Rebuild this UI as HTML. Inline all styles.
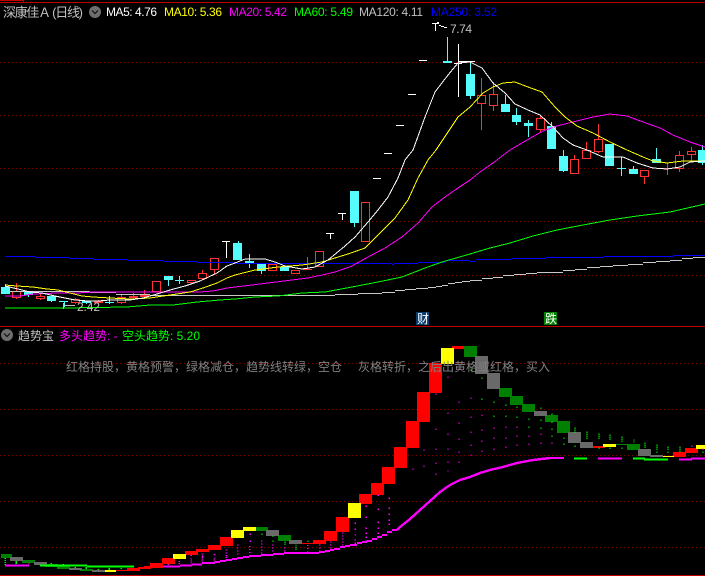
<!DOCTYPE html>
<html><head><meta charset="utf-8"><style>
html,body{margin:0;padding:0;background:#000;width:705px;height:576px;overflow:hidden}
svg{display:block}
text{font-family:"WenQuanYi Zen Hei","Liberation Sans","Noto Sans CJK SC",sans-serif;font-size:12px}
.l{font-family:"Liberation Sans",sans-serif;font-size:12px}
.g path{fill:none;stroke:#7a0000;stroke-width:1;stroke-dasharray:1 3}
.m{fill:none;stroke-width:1;stroke-linejoin:miter}
.r path{fill:none;stroke:#ff3232}
.r rect{fill:#000;stroke:#ff3232}
.c path{fill:none;stroke:#54fcfc}
.c rect{fill:#54fcfc}
.w path{fill:none;stroke:#fff}
</style></head><body>
<svg width="705" height="576" viewBox="0 0 705 576" shape-rendering="crispEdges">
<rect width="705" height="576" fill="#000"/>
<!-- borders -->
<path d="M0 2.5H705M0 .5H23M23.5 0V2M0 326.5H705M0 575.5H705" stroke="#c00000" fill="none"/>
<!-- grid -->
<g class="g">
<path d="M0 62.5H705M0 115.5H705M0 168.5H705M0 221.5H705M0 275.5H705M0 363.5H705M0 409.5H705M0 455.5H705M0 501.5H705M0 547.5H705"/>
</g>
<!-- cyan candles -->
<g class="c">
<path d="M5.5 284V294M28.5 291V297M51.5 296V302M64.5 301V307M86.5 301V304M109.5 296V304M168.5 280V286M179.5 276V284M238.5 241V243M249.5 254V268M261.5 271V274M354.5 223V227M447.5 37V62M470.5 61V99M505.5 95V104M516.5 108V125M528.5 120V137M551.5 122V126M563.5 150V172M621.5 157V176M633.5 166V169M656.5 148V163M702.5 145V165"/>
<rect x="1" y="287" width="9" height="7"/><rect x="24" y="291" width="9" height="4"/><rect x="47" y="296" width="9" height="5"/>
<rect x="59" y="301" width="9" height="1"/><rect x="82" y="301" width="9" height="2"/><rect x="105" y="302" width="9" height="1"/>
<rect x="164" y="276" width="9" height="4"/><rect x="175" y="280" width="9" height="1"/><rect x="233" y="243" width="9" height="17"/>
<rect x="245" y="261" width="9" height="2"/><rect x="257" y="264" width="9" height="7"/><rect x="280" y="267" width="9" height="4"/>
<rect x="350" y="191" width="9" height="32"/><rect x="443" y="61" width="9" height="2"/><rect x="466" y="74" width="9" height="22"/>
<rect x="501" y="104" width="9" height="8"/><rect x="512" y="115" width="9" height="7"/><rect x="524" y="123" width="9" height="3"/>
<rect x="547" y="126" width="9" height="23"/><rect x="559" y="156" width="9" height="15"/><rect x="605" y="144" width="9" height="22"/>
<rect x="617" y="168" width="9" height="1"/><rect x="629" y="169" width="9" height="5"/><rect x="652" y="159" width="9" height="4"/>
<rect x="698" y="150" width="7" height="13"/>
</g>
<!-- red candles -->
<g class="r">
<path d="M16.5 283V299M40.5 294V300M75.5 298V304M98.5 300V304M121.5 295V304M133.5 293V300M144.5 290V297M202.5 270V280M214.5 258V274M307.5 257V270M481.5 78V130M493.5 82V111M540.5 115V132M574.5 155V174M586.5 142V158M598.5 124V153M644.5 170V184M667.5 163V175M679.5 151V172M691.5 147V161"/>
<rect x="12.5" y="291.5" width="8" height="6"/><rect x="36.5" y="296.5" width="8" height="2"/><rect x="71.5" y="299.5" width="8" height="3"/>
<rect x="94.5" y="301.5" width="8" height="1"/><rect x="117.5" y="297.5" width="8" height="5"/><rect x="129.5" y="296.5" width="8" height="1" style="fill:#ff3232"/>
<rect x="140.5" y="295.5" width="8" height="1" style="fill:#ff3232"/><rect x="152.5" y="281.5" width="8" height="10"/>
<rect x="187.5" y="280.5" width="8" height="2"/><rect x="198.5" y="273.5" width="8" height="5"/><rect x="210.5" y="258.5" width="8" height="11"/>
<rect x="268.5" y="264.5" width="8" height="6"/><rect x="291.5" y="270.5" width="8" height="3"/><path d="M303 269.5H312"/>
<rect x="315.5" y="251.5" width="8" height="15"/><rect x="361.5" y="202.5" width="8" height="39"/>
<rect x="477.5" y="95.5" width="8" height="8"/><rect x="489.5" y="94.5" width="8" height="11"/><rect x="536.5" y="118.5" width="8" height="11"/>
<rect x="570.5" y="159.5" width="8" height="14"/><rect x="582.5" y="150.5" width="8" height="8"/><rect x="594.5" y="139.5" width="8" height="12"/>
<rect x="640.5" y="170.5" width="8" height="6"/><path d="M663 168.5H672"/><rect x="675.5" y="155.5" width="8" height="13"/><rect x="687.5" y="151.5" width="8" height="3"/>
</g>
<!-- white doji / dashes -->
<g class="w">
<path d="M222 241.5H230M226.5 241V258M326 233.5H334M330.5 233V239M338 213.5H346M342.5 213V220M373 178.5H381M384 153.5H392M396 125.5H404M408 94.5H416M419 60.5H427M454 63.5H462M458.5 44V97M458 61.5H475"/>
</g>
<!-- MAs -->
<path class="m" stroke="#0000ff" d="M5 256.5H35M35 257.5H70M70 258.5H93M93 259.5H128M128 260.5H163M163 261.5H197M197 262.5H235M235 263.5H392M392 264.5H394M394 263.5H418M418 262.5H445M445 260.5H470M470 261.5H476M476 259.5H511M511 258.5H546M546 257.5H604M604 256.5H673M673 255.5H705" stroke-width="1.4"/>
<path class="m" stroke="#c8c8c8" d="M10 291.5H90M90 292.5H116M116 294.5H150M150 295.5H335M335 294.5H358M358 293.5H382M382 292.5H395M395 290.5H405M405 289.5H416M416 288.5H428M428 287.5H436M436 286.5H442M442 285.5H448M448 283.5H455M455 282.5H462M462 281.5H470M470 280.5H482M482 278.5H493M493 277.5H503M503 275.5H514M514 274.5H526M526 273.5H537M537 272.5H563M563 270.5H575M575 269.5H587M587 267.5H600M600 266.5H613M613 265.5H628M628 264.5H643M643 262.5H656M656 261.5H670M670 260.5H682M682 258.5H693M693 257.5H705"/>
<polyline class="m" stroke="#00ff00" points="5,308 63,308 127,307 150,305 173,305 197,302 220,300 235,299 255,297 278,296 302,293 325,292 352,287 378,282 402,277 425,268 442,262 470,254 490,248 510,243 533,236 557,230 583,225 610,220 637,216 670,212 705,204"/>
<polyline class="m" stroke="#ff00ff" points="5,296 20,296 33,294 57,293 77,293 93,292 200,292 213,291 227,288 235,287 252,285 268,283 292,280 308,278 322,275 335,272 352,266 368,257 385,248 402,237 418,223 432,207 445,197 458,188 470,180 480,172 493,163 510,150 527,140 543,131 557,126 573,122 593,117 610,114 627,116 643,122 660,128 673,135 690,142 705,147"/>
<polyline class="m" stroke="#ffff00" points="5,285 17,286 33,287 47,289 58,290 70,293 82,296 93,297 110,298 130,299 150,298 163,296 177,294 190,292 203,288 217,283 227,278 235,275 255,270 278,267 302,265 322,262 348,254 365,248 378,235 395,218 408,200 418,178 428,160 436,150 448,132 458,117 470,107 483,93 493,87 503,83 515,82 528,87 542,92 555,107 565,117 577,126 593,133 610,142 627,150 643,157 653,161 667,163 683,161 705,161"/>
<polyline class="m" stroke="#ffffff" points="5,286 18,289 30,292 42,293 55,296 65,298 75,300 88,301 98,301 110,300 130,300 143,298 157,294 170,290 185,286 200,281 217,273 227,266 235,263 245,259 265,259 275,262 285,266 302,269 315,267 328,260 345,246 355,237 368,222 378,210 388,197 398,178 405,160 413,150 425,117 435,92 448,75 458,63 470,62 482,68 493,83 505,93 515,104 528,110 540,115 553,127 563,138 573,145 587,150 603,157 623,157 637,163 653,168 667,169 680,167 690,162 705,161"/>
<!-- price labels -->
<path d="M432 23.5H439M435.5 23V31M437 22.5H439M439 25.5H441M441 26.5H444M444 27.5H447" stroke="#fff" fill="none"/>
<text class="l" x="450" y="33" fill="#c0c0c0" textLength="22">7.74</text>
<path d="M63.5 303V309M65 305.5H75" stroke="#c0c0c0" fill="none"/>
<text class="l" x="77" y="311" fill="#c0c0c0" textLength="23">2.42</text>
<!-- header upper -->
<text x="3" y="17" fill="#c0c0c0" style="font-size:13px" textLength="80">深康佳Ａ (日线)</text>
<circle cx="95" cy="12" r="6" fill="#6e6e6e" shape-rendering="auto"/>
<path d="M92 10.5L95 13.5L98 10.5" stroke="#111" fill="none" stroke-width="1.2" shape-rendering="auto"/>
<text class="l" x="106" y="16" fill="#ffffff" textLength="51">MA5: 4.76</text>
<text class="l" x="164" y="16" fill="#ffff00" textLength="58">MA10: 5.36</text>
<text class="l" x="229" y="16" fill="#ff00ff" textLength="58">MA20: 5.42</text>
<text class="l" x="294" y="16" fill="#00ff00" textLength="59">MA60: 5.49</text>
<text class="l" x="359" y="16" fill="#c0c0c0" textLength="64">MA120: 4.11</text>
<text class="l" x="431" y="16" fill="#0000ff" textLength="66">MA250: 3.52</text>
<!-- tags -->
<rect x="416" y="312" width="13" height="13" fill="#0a3c6e"/>
<text x="417" y="323" fill="#fff">财</text>
<rect x="544" y="312" width="13" height="13" fill="#008000"/>
<text x="545" y="323" fill="#fff">跌</text>
<!-- lower blocks -->
<g fill="#008000">
<rect x="1" y="554" width="11" height="4"/><rect x="22" y="560" width="13" height="3"/><rect x="45" y="564" width="13" height="3"/><rect x="57" y="566" width="13" height="3"/><rect x="80" y="569" width="13" height="2"/><rect x="256" y="527" width="12" height="4"/><rect x="278" y="535" width="13" height="6"/><rect x="464" y="346" width="13" height="11"/><rect x="499" y="388" width="13" height="9"/><rect x="510" y="396" width="13" height="9"/><rect x="522" y="404" width="13" height="8"/><rect x="545" y="415" width="13" height="7"/><rect x="557" y="421" width="13" height="12"/><rect x="616" y="444" width="11" height="1"/><rect x="627" y="444" width="13" height="6"/>
</g>
<g fill="#696969">
<rect x="10" y="557" width="13" height="4"/><rect x="34" y="562" width="13" height="3"/><rect x="69" y="568" width="13" height="2"/><rect x="92" y="570" width="13" height="2"/><rect x="266" y="530" width="13" height="6"/><rect x="289" y="540" width="13" height="4"/><rect x="475" y="356" width="13" height="18"/><rect x="487" y="373" width="13" height="16"/><rect x="534" y="411" width="13" height="5"/><rect x="568" y="432" width="13" height="11"/><rect x="580" y="442" width="13" height="6"/><rect x="638" y="449" width="13" height="7"/><rect x="650" y="455" width="13" height="2"/>
</g>
<g fill="#ff0000">
<rect x="116" y="570" width="11" height="1"/><rect x="127" y="568" width="13" height="3"/><rect x="138" y="567" width="13" height="2"/><rect x="144" y="566" width="6" height="1"/><rect x="150" y="563" width="13" height="5"/><rect x="162" y="558" width="13" height="6"/><rect x="185" y="551" width="13" height="4"/><rect x="196" y="549" width="13" height="3"/><rect x="208" y="545" width="13" height="5"/><rect x="220" y="537" width="13" height="9"/><rect x="302" y="543" width="11" height="1"/><rect x="313" y="540" width="13" height="4"/><rect x="324" y="531" width="13" height="10"/><rect x="336" y="517" width="13" height="15"/><rect x="359" y="494" width="13" height="10"/><rect x="371" y="483" width="13" height="12"/><rect x="382" y="467" width="13" height="17"/><rect x="394" y="447" width="13" height="21"/><rect x="406" y="421" width="13" height="27"/><rect x="417" y="392" width="13" height="30"/><rect x="429" y="363" width="13" height="30"/><rect x="452" y="346" width="12" height="3"/><rect x="593" y="446" width="12" height="2"/><rect x="673" y="452" width="13" height="5"/><rect x="685" y="448" width="13" height="5"/>
</g>
<g fill="#ffff00">
<rect x="105" y="570" width="11" height="2"/><rect x="173" y="554" width="13" height="5"/><rect x="231" y="530" width="13" height="8"/><rect x="243" y="527" width="13" height="4"/><rect x="348" y="503" width="13" height="15"/><rect x="441" y="348" width="13" height="16"/><rect x="603" y="444" width="13" height="3"/><rect x="663" y="456" width="11" height="1"/><rect x="696" y="445" width="9" height="4"/>
</g>
<!-- dots, zoom coordinates -->
<g transform="translate(300,325) scale(.33334)" fill="none" stroke-width="4">
<path stroke="#ff00ff" d="M337 433h4M370 376h4M370 424h4M406 208h4M406 313h4M406 373h4M406 415h4M406 448h4M442 157h4M442 265h4M442 328h4M442 373h4M442 412h4M442 438h4M475 132h4M475 232h4M475 295h4M475 343h4M475 382h4M475 412h4M511 220h4M511 277h4M511 322h4M511 361h4M511 391h4M544 271h4M544 316h4M544 349h4M544 379h4M580 310h4M580 340h4M580 373h4M616 307h4M616 340h4M616 367h4M649 307h4M649 334h4M649 361h4M685 334h4M685 358h4M721 328h4M721 355h4M754 355h4"/>
<path stroke="#00ff00" d="M511 136h4M544 160h4M544 223h4M580 232h4M580 274h4M616 241h4M616 274h4M649 247h4M649 277h4M685 283h4M685 307h4M721 250h4M721 286h4M721 310h4M754 268h4M754 292h4M754 313h4M754 334h4"/>
</g>
<g transform="translate(470,370) scale(.33334)" fill="none" stroke-width="4">
<path stroke="#00ff00" d="M280 205h4M280 223h4M313 175h4M313 181h4M313 187h4M313 229h4M349 187h4M349 193h4M349 199h4M349 205h4M385 193h4M385 199h4M385 205h4M385 235h4M418 196h4M418 202h4M418 208h4M418 235h4M454 202h4M454 208h4M454 214h4M454 235h4M490 210h4M490 216h4M523 220h4M523 226h4M523 232h4M559 226h4M559 232h4M559 238h4M559 247h4M592 232h4M592 238h4M592 247h4M628 232h4M628 238h4M628 244h4M697 247h4"/>
<path stroke="#ff00ff" d="M664 229h4M697 238h4"/>
</g>
<g transform="translate(200,460) scale(.33334)" fill="none" stroke-width="4">
<path stroke="#ff00ff" stroke-dasharray="3 6" d="M8 280V305M45 283V305M80 268V295M113 253V290M149 258V283M185 241V283M218 253V280M254 262V275M323 255V275M359 253V275M392 244V265M428 217V260"/>
<path stroke="#ff00ff" d="M149 223h4M149 244h4M464 190h4M464 208h4M464 225h4M464 240h4M464 250h4M497 139h4M497 172h4M497 205h4M497 220h4M497 232h4M497 244h4M533 106h4M533 148h4M533 187h4M533 205h4M533 220h4M533 232h4M566 115h4M566 145h4M566 163h4M566 181h4M566 193h4"/>
<path stroke="#00ff00" d="M184 223h4M217 229h4M217 244h4M253 247h4M253 253h4M286 255h4M286 262h4M286 268h4M322 244h4"/>
</g>
<g transform="translate(0,500) scale(.33334)" fill="none" stroke-width="4">
<path stroke="#00ff00" stroke-dasharray="3 3" d="M16 174V195"/>
<path stroke="#00ff00" d="M49 183V192M154 189V192M190 192V195M226 201V204M259 201V207M295 207V210M328 204V210M364 204V207"/>
<path stroke="#ff00ff" d="M87 189V195M505 192V198M538 183V195M574 165V168M574 175V190M607 160V186M643 162V165M643 175V186M679 148V151M679 157V160M679 165V180" stroke-dasharray="3 3"/>
</g>
<!-- trend line -->
<g fill="none" stroke-width="2">
<path stroke="#ff00ff" d="M5 565.5H29"/>
<path stroke="#00ff00" d="M40 565.5H87M87 566.5H134M574 458.5H587M633 458.5H645M644 459.5H668"/>
<path stroke="#ff00ff" d="M163 566.5H180M180 565.5H192M192 564.5H202M202 563H215M215 562H220M220 561H226M226 560H232M232 559H237M237 558H243M243 557H249M249 556H261M261 555H273M273 554H284M284 553H319M319 552H325M325 551H330M330 550H334M334 549H340M340 547H345M345 546H350M350 545H357M357 543H362M362 542H367M367 541H372M372 539H377M377 537H382M382 535H387M387 532H392M392 530H397M598 458.5H622M679 459.5H692M691 458.5H705"/>
<polyline stroke="#ff00ff" stroke-width="2.4" points="397,530 400,527 410,519 420,510 430,501 440,492 450,485 460,480 470,477 480,473 490,470 503,467 517,463 533,460 550,458 564,458"/>
</g>
<!-- header lower -->
<circle cx="7" cy="335" r="6" fill="#6e6e6e" shape-rendering="auto"/>
<path d="M4 333.5L7 336.5L10 333.5" stroke="#111" fill="none" stroke-width="1.2" shape-rendering="auto"/>
<text x="18" y="340" fill="#c0c0c0">趋势宝</text>
<text x="59" y="340" fill="#ff00ff">多头趋势: -</text>
<text x="122" y="340" fill="#00ff00">空头趋势: 5.20</text>
<text x="66" y="371" fill="#808080">红格持股，黄格预警，绿格减仓，趋势线转绿，空仓</text>
<text x="358" y="371" fill="#808080">灰格转折，之后出黄格或红格，买入</text>
</svg>
</body></html>
